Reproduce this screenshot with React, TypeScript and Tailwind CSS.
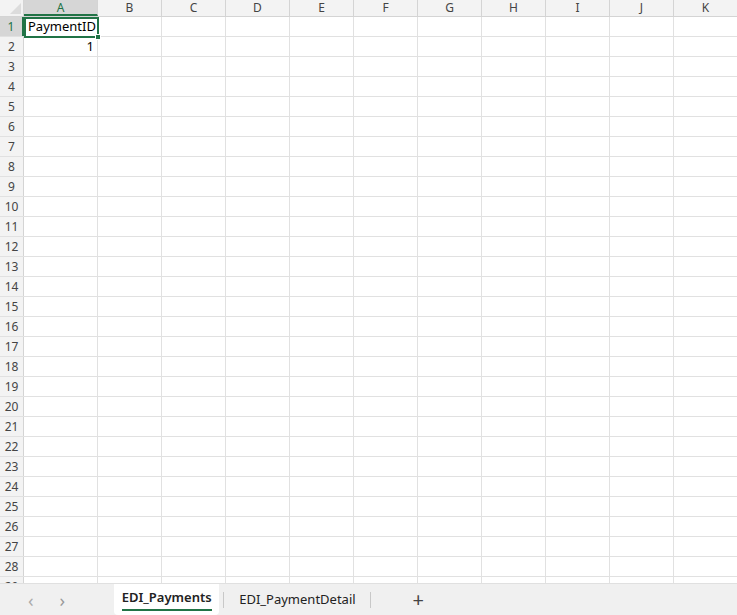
import React from "react";

const cols = ["A","B","C","D","E","F","G","H","I","J","K"];
const widths = [74,64,64,64,64,64,64,64,64,64,64];

export default function App() {
  const rows = Array.from({ length: 29 }, (_, i) => i + 1);
  return (
    <div className="w-[737px] h-[615px] bg-white overflow-hidden flex flex-col" style={{ fontFamily: '"Noto Sans", "Open Sans", sans-serif' }}>
      <div className="h-[583px] overflow-hidden relative">
        <div className="flex h-[17px] bg-[#f3f3f3] border-b border-[#d4d4d4]">
          <div className="w-[24px] shrink-0 border-r border-[#d4d4d4] relative">
            <svg className="absolute right-[2px] bottom-[2px]" width="11" height="11"><polygon points="11,0 11,11 0,11" fill="#dcdcdc" /></svg>
          </div>
          {cols.map((c, i) => (
            <div key={c} style={{ width: widths[i] }} className={`shrink-0 border-r border-[#d4d4d4] text-[12px] leading-[16px] text-center ${i === 0 ? "bg-[#d6d6d6] text-[#217346] border-b-2 border-b-[#217346]" : "text-[#444]"}`}>{c}</div>
          ))}
        </div>
        {rows.map((r) => (
          <div key={r} className="flex h-[20px] border-b border-[#e1e1e1]">
            <div className={`w-[24px] shrink-0 text-[12px] leading-[19px] text-center border-r border-[#d4d4d4] ${r === 1 ? "bg-[#d6d6d6] text-[#217346] border-r-2 border-r-[#217346]" : "bg-[#f3f3f3] text-[#444]"}`}>{r}</div>
            {cols.map((c, i) => (
              <div key={c} style={{ width: widths[i] }} className="shrink-0 border-r border-[#e1e1e1] text-[13px] leading-[19px] text-black px-[3px]" >
                {r === 1 && i === 0 ? <span className="ml-[1px]">PaymentID</span> : r === 2 && i === 0 ? <div className="text-right">1</div> : ""}
              </div>
            ))}
          </div>
        ))}
        <div className="absolute left-[24px] top-[17px] w-[75px] h-[21px] border-2 border-[#217346] pointer-events-none" />
        <div className="absolute left-[95px] top-[34px] w-[6px] h-[6px] bg-[#217346] border border-white" />
      </div>
      <div className="flex-1 bg-[#f0f0f0] border-t border-[#e0e0e0] flex items-center text-[13px] text-[#222]">
        <span className="ml-[28px] text-[#aaa] text-[18px] leading-none">‹</span>
        <span className="ml-[26px] text-[#999] text-[18px] leading-none">›</span>
        <div className="ml-[49px] h-full bg-white rounded-b-[4px] w-[105px] flex flex-col items-center justify-center">
          <span className="font-semibold text-[#222]">EDI_Payments</span>
          <div className="w-[90px] h-[2px] bg-[#217346] mt-[1px]" />
        </div>
        <span className="ml-[4px] w-px h-[16px] bg-[#c8c8c8]" />
        <span className="ml-[15px]">EDI_PaymentDetail</span>
        <span className="ml-[14px] w-px h-[16px] bg-[#c8c8c8]" />
        <span className="ml-[42px] text-[20px] leading-none text-[#444]">+</span>
      </div>
    </div>
  );
}
